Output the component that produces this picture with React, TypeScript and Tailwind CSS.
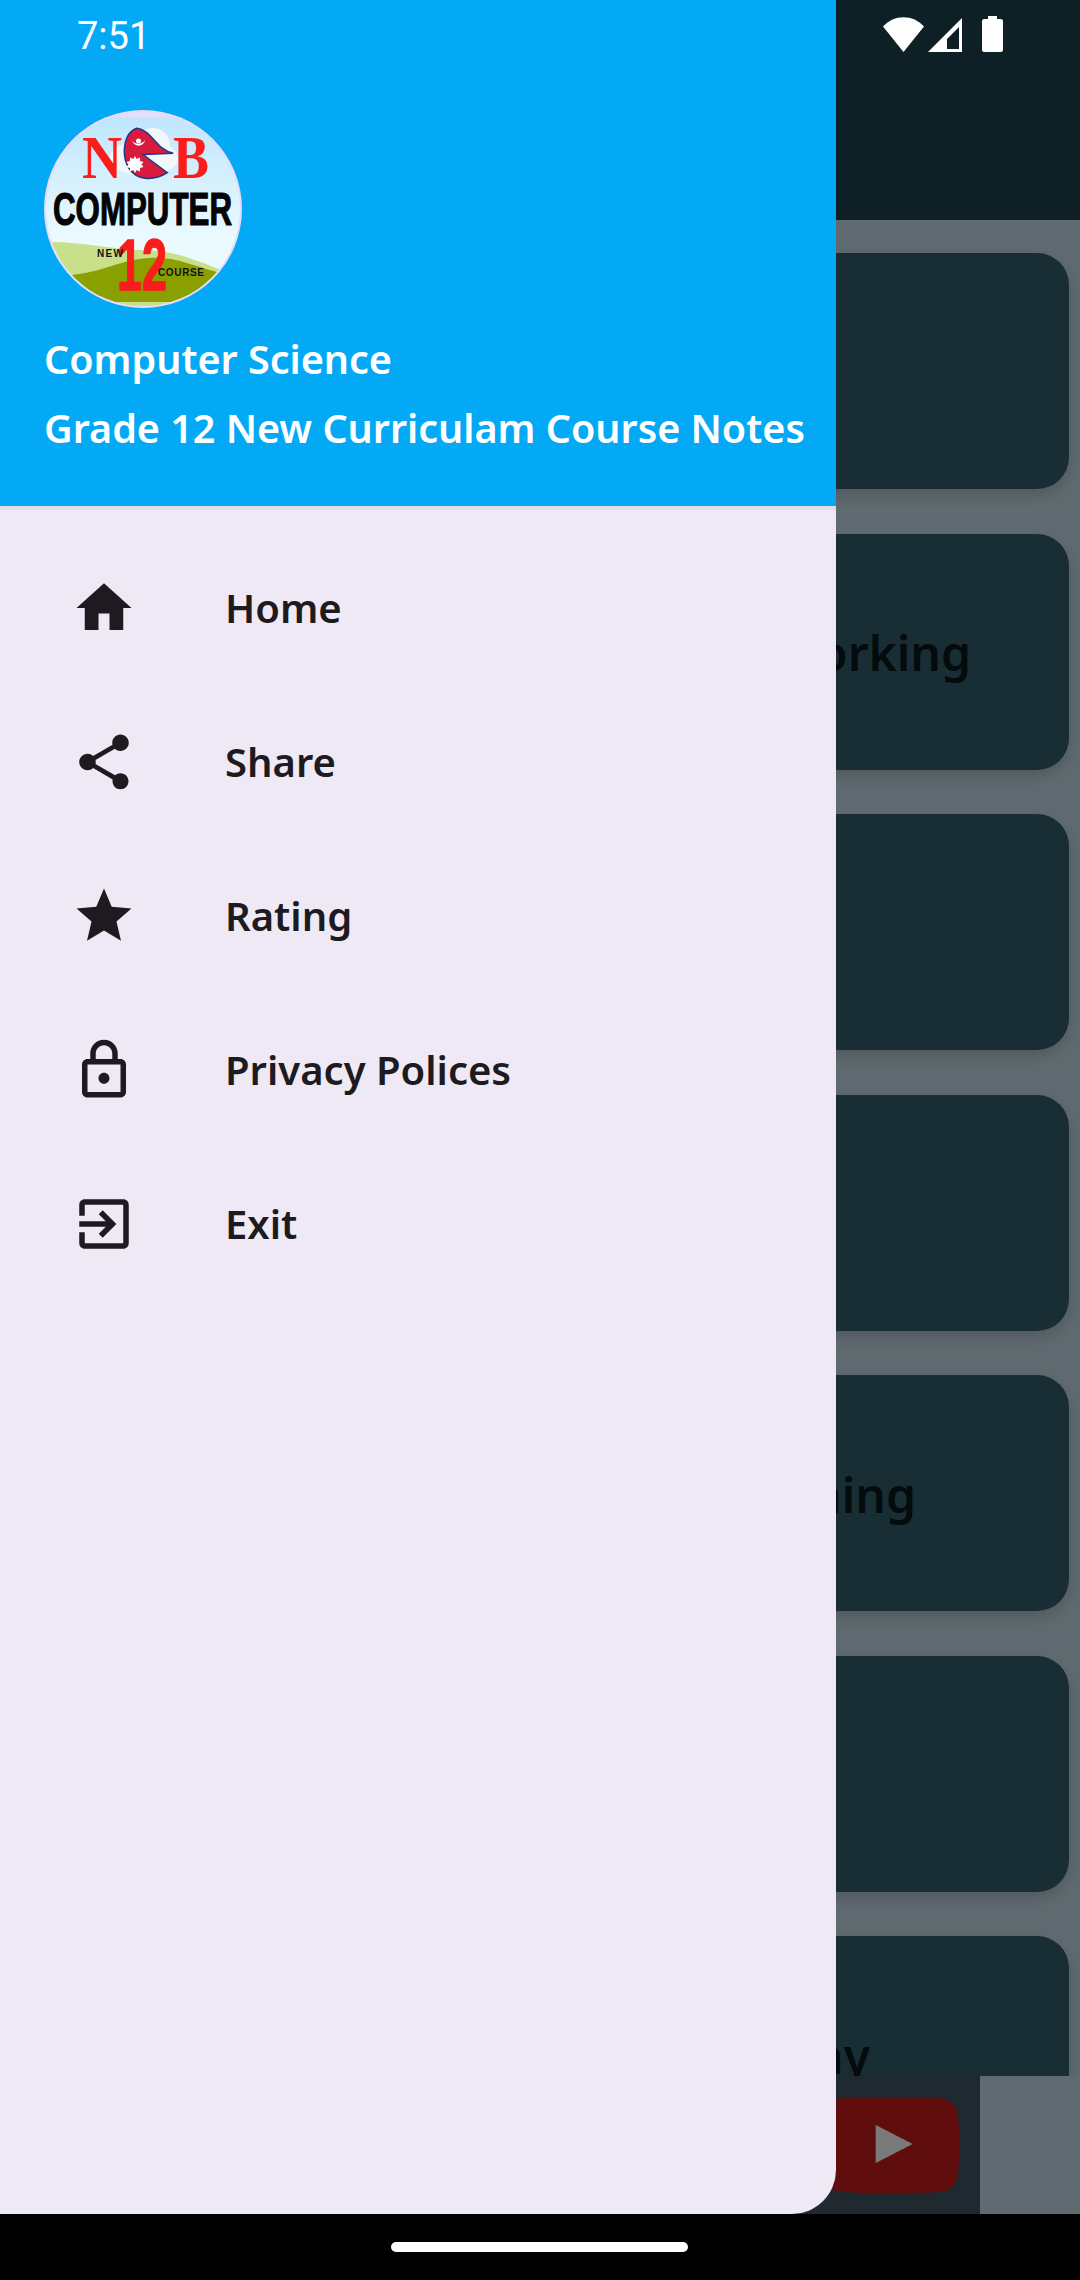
import { ReactNode } from "react";

const menuItems = [
  {
    label: "Home",
    path: "M10 20v-6h4v6h5v-8h3L12 3 2 12h3v8z",
  },
  {
    label: "Share",
    path: "M18 16.08c-.76 0-1.44.3-1.96.77L8.91 12.7c.05-.23.09-.46.09-.7s-.04-.47-.09-.7l7.05-4.11c.54.5 1.25.81 2.04.81 1.66 0 3-1.34 3-3s-1.34-3-3-3-3 1.34-3 3c0 .24.04.47.09.7L8.04 9.81C7.5 9.31 6.79 9 6 9c-1.66 0-3 1.34-3 3s1.34 3 3 3c.79 0 1.5-.31 2.04-.81l7.12 4.16c-.05.21-.08.43-.08.65 0 1.61 1.31 2.92 2.92 2.92s2.92-1.31 2.92-2.92-1.31-2.92-2.92-2.92z",
  },
  {
    label: "Rating",
    path: "M12 17.27L18.18 21l-1.64-7.03L22 9.24l-7.19-.61L12 2 9.19 8.63 2 9.24l5.46 4.73L5.82 21z",
  },
  {
    label: "Privacy Polices",
    path: "M18 8h-1V6c0-2.76-2.24-5-5-5S7 3.24 7 6v2H6c-1.1 0-2 .9-2 2v10c0 1.1.9 2 2 2h12c1.1 0 2-.9 2-2V10c0-1.1-.9-2-2-2zM9 6c0-1.66 1.34-3 3-3s3 1.34 3 3v2H9V6zm9 14H6V10h12v10zm-6-3c1.1 0 2-.9 2-2s-.9-2-2-2-2 .9-2 2 .9 2 2 2z",
  },
  {
    label: "Exit",
    path: "M10.09 15.59L11.5 17l5-5-5-5-1.41 1.41L12.67 11H3v2h9.67l-2.58 2.59zM19 3H5c-1.11 0-2 .9-2 2v4h2V5h14v14H5v-4H3v4c0 1.1.89 2 2 2h14c1.1 0 2-.9 2-2V5c0-1.1-.9-2-2-2z",
  },
];

function Card({ children, right = 0 }: { children?: ReactNode; right?: number }) {
  return (
    <div
      className="h-[236px] shrink-0 rounded-[32px] bg-[#182e34] shadow-[0_6px_16px_rgba(0,0,0,0.18)] flex items-center justify-end pt-[3px] text-[48px] font-semibold leading-none text-[#030b0d]"
      style={{ paddingRight: right }}
    >
      {children}
    </div>
  );
}

function NebLogo() {
  return (
    <svg viewBox="0 0 198 198" className="w-[198px] h-[198px] block">
      <defs>
        <clipPath id="logoClip">
          <circle cx="99" cy="99" r="97" />
        </clipPath>
        <linearGradient id="sky" x1="0" y1="0" x2="0" y2="1">
          <stop offset="0" stopColor="#bfe6fc" />
          <stop offset="0.65" stopColor="#eafaff" />
        </linearGradient>
      </defs>
      <circle cx="99" cy="99" r="99" fill="#e6dcfb" />
      <g clipPath="url(#logoClip)">
        <rect x="0" y="7" width="198" height="185" fill="url(#sky)" />
        <ellipse cx="100" cy="48" rx="34" ry="18" fill="#f2f7fa" />
        <circle cx="109" cy="35" r="17" fill="#f2f7fa" />
        <path d="M6 132C40 132 70 140 100 140C130 140 150 150 194 166V198H6Z" fill="#c9e08b" />
        <path d="M27 165C60 162 75 150 105 148C135 146 150 158 194 167V192H27Z" fill="#8a9f00" />
      </g>
      <text x="38" y="68" fontFamily="Liberation Serif" fontWeight="700" fontSize="62" fill="#fb1c1c" textLength="40" lengthAdjust="spacingAndGlyphs">N</text>
      <text x="129" y="68" fontFamily="Liberation Serif" fontWeight="700" fontSize="62" fill="#fb1c1c" textLength="36" lengthAdjust="spacingAndGlyphs">B</text>
      <path
        d="M92.7 18.3C108 20 112 40 129.3 43.3L99 44.5L123.3 62.7C115 68 108 69 101 68.3C88 67 80 55 80.3 40C81 30 85 21 92.7 18.3Z"
        fill="#d91a3f"
        stroke="#1a3b8c"
        strokeWidth="1.5"
      />
      <path d="M88 30C90 35 98 35 101 30C100 37 90 38 88 30Z" fill="#fff" />
      <circle cx="94.5" cy="31" r="2.5" fill="#fff" />
      <polygon
        points="91,46 92.7,49 96,47.5 96,51 99.5,52 97.5,54.5 99.5,57 96,58 96,61.5 92.7,60 91,63 89.3,60 86,61.5 86,58 82.5,57 84.5,54.5 82.5,52 86,51 86,47.5 89.3,49"
        fill="#fff"
      />
      <text x="9" y="115" fontFamily="Liberation Sans" fontWeight="700" fontSize="46" fill="#050505" stroke="#050505" strokeWidth="1.2" textLength="179" lengthAdjust="spacingAndGlyphs">COMPUTER</text>
      <text x="73" y="180" fontFamily="Liberation Sans" fontWeight="700" fontSize="72" fill="#fb1c1c" stroke="#fb1c1c" strokeWidth="1.5" textLength="50" lengthAdjust="spacingAndGlyphs">12</text>
      <text x="53" y="147" fontFamily="Liberation Sans" fontWeight="700" fontSize="10" fill="#111" textLength="26">NEW</text>
      <text x="114" y="166" fontFamily="Liberation Sans" fontWeight="700" fontSize="10" fill="#111" textLength="46">COURSE</text>
    </svg>
  );
}

export default function App() {
  return (
    <div className="relative w-[1080px] h-[2280px] overflow-hidden bg-black font-['Noto_Sans',sans-serif]">
      {/* Screen behind the drawer, dimmed */}
      <div className="flex flex-col h-[2214px] bg-[#606b71]">
        <div className="h-[220px] shrink-0 bg-[#0e1f25] flex justify-end">
          <div className="flex items-start gap-[4px] pt-[16px] pr-[77px]">
            <svg viewBox="0 0 41 35" className="w-[41px] h-[35px] mt-[1px]">
              <path d="M0 9.5C11-3 30-3 41 9.5L20.5 35Z" fill="#fff" />
            </svg>
            <svg viewBox="0 0 34 34" className="w-[34px] h-[34px] mt-[2px]">
              <path fillRule="evenodd" d="M34 0V34H0ZM19 21V31H31V9Z" fill="#fff" />
            </svg>
            <svg viewBox="0 0 21 36" className="w-[21px] h-[36px] ml-[16px]">
              <path d="M6 0H15V3H19C20 3 21 4 21 5V34C21 35 20 36 19 36H2C1 36 0 35 0 34V5C0 4 1 3 2 3H6Z" fill="#fff" />
            </svg>
          </div>
        </div>

        <div className="flex-1 min-h-0 overflow-hidden flex flex-col gap-[44.5px] pt-[33px] pr-[11px] pl-[100px]">
          <Card />
          <Card right={98}>Networking</Card>
          <Card />
          <Card />
          <Card right={153}>Machine Learning</Card>
          <Card />
          <Card right={199}>Gateway</Card>
        </div>

        {/* Ad banner */}
        <div className="h-[138px] shrink-0 w-[980px] bg-[#20292f] flex items-center justify-end pr-[21px]">
          <svg viewBox="0 0 136 96" className="w-[136px] h-[96px]">
            <path d="M20 1C50-1 86-1 116 1C128 2 134 8 135 20C137 38 137 58 135 76C134 88 128 94 116 95C86 97 50 97 20 95C8 94 2 88 1 76C-1 58-1 38 1 20C2 8 8 2 20 1Z" fill="#5f0e0d" />
            <path d="M52.7 28L89.7 47L52.7 66Z" fill="#7a7a7a" />
          </svg>
        </div>
      </div>

      {/* Navigation drawer */}
      <div className="absolute left-0 top-0 w-[836px] h-[2214px] rounded-br-[44px] bg-[#efe9f5] overflow-hidden">
        <div className="h-[506px] bg-[#04a9f5] text-white">
          <div className="pl-[77px] pt-[14px] h-[110px] font-['Roboto',sans-serif] text-[38px] leading-[44px]">7:51</div>
          <div className="pl-[44px]">
            <NebLogo />
            <p className="mt-[17px] text-[39.5px] font-semibold leading-[69px]">Computer Science</p>
            <p className="text-[39.5px] font-semibold leading-[69px] whitespace-nowrap">Grade 12 New Curriculam Course Notes</p>
          </div>
        </div>
        <div className="h-[4px] bg-[#e2dde9]" />
        <nav className="pt-[21px]">
          {menuItems.map((item) => (
            <div key={item.label} className="h-[154px] flex items-center pl-[71px]">
              <svg viewBox="0 0 24 24" className="w-[66px] h-[66px]" fill="#1d1b20">
                <path d={item.path} />
              </svg>
              <span className="ml-[88px] text-[40px] font-semibold text-[#1d1b20]">{item.label}</span>
            </div>
          ))}
        </nav>
      </div>

      {/* Gesture pill */}
      <div className="absolute left-[391px] top-[2242px] w-[297px] h-[10px] rounded-full bg-white" />
    </div>
  );
}
